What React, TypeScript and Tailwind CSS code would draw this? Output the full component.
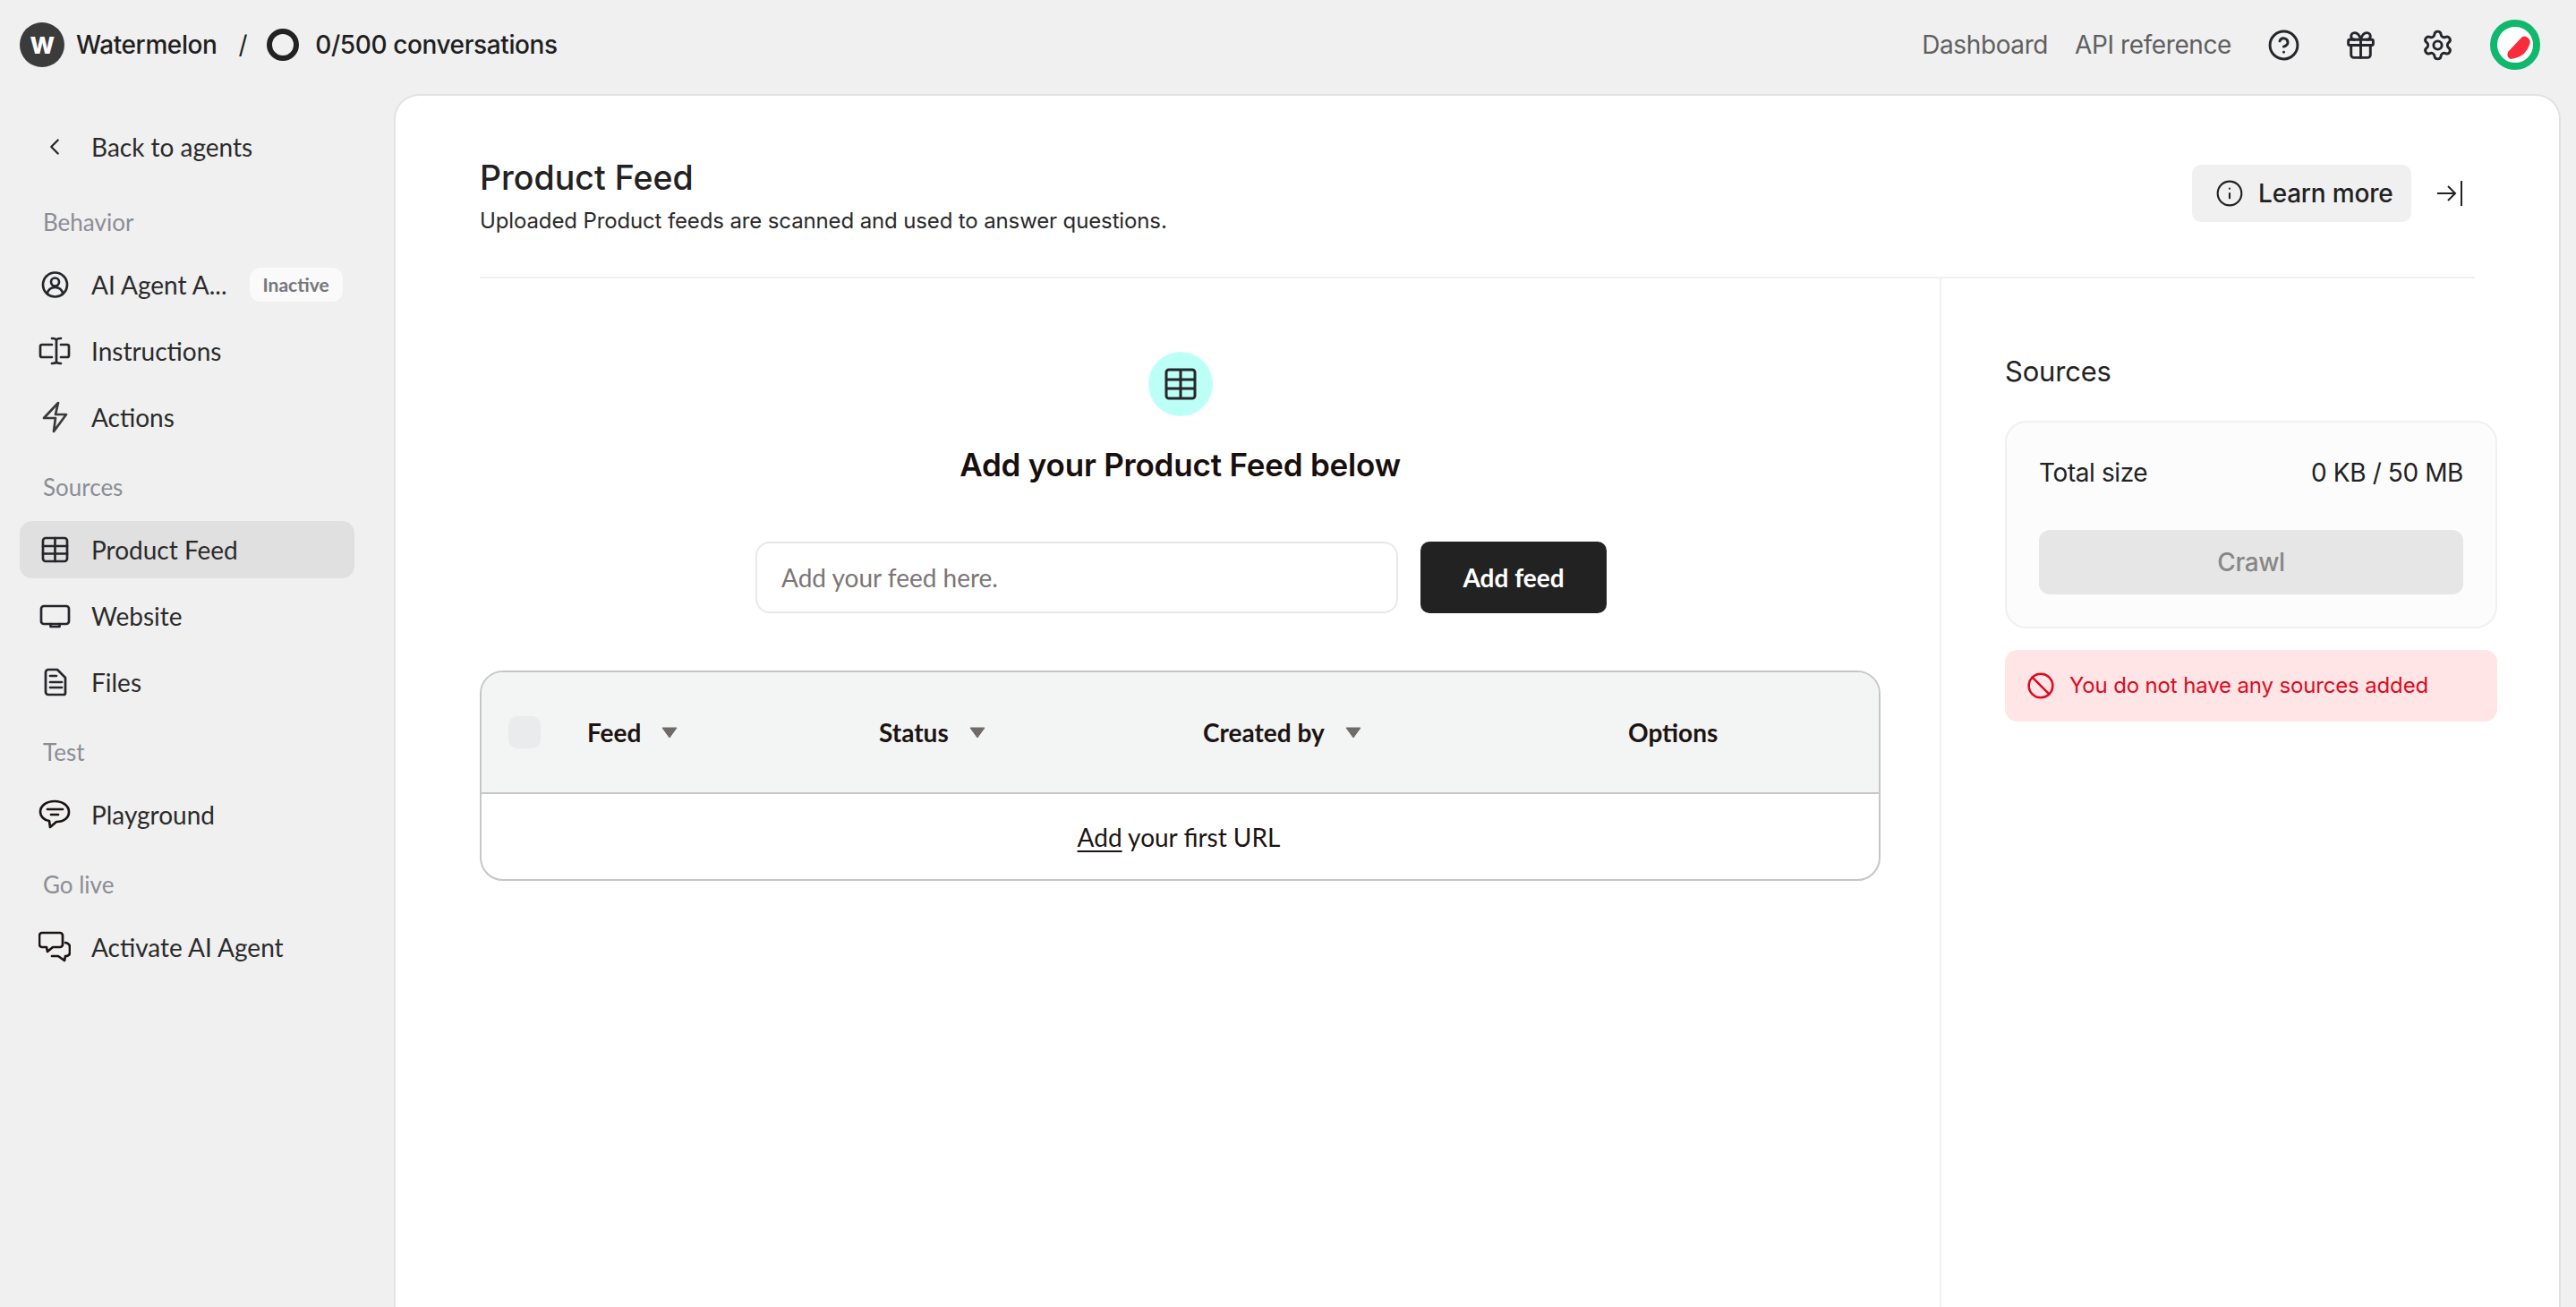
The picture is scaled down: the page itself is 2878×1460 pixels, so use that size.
import { Ban, ChevronLeft, CircleHelp, Gift, Info, Settings } from 'lucide-react';
import type { ReactNode } from 'react';

const ICON_PROPS = {
  viewBox: '0 0 36 36',
  fill: 'none',
  stroke: 'currentColor',
  strokeWidth: 2.7,
  strokeLinecap: 'round',
  strokeLinejoin: 'round',
  className: 'w-[36px] h-[36px] shrink-0 text-[#24262b]',
} as const;

function PersonIcon() {
  return (
    <svg {...ICON_PROPS}>
      <circle cx="18.5" cy="18" r="13.5" />
      <circle cx="18.5" cy="15" r="4.5" />
      <path d="M9.5 28c1.5-5 5-7 9-7s7.5 2 9 7" />
    </svg>
  );
}

function InstructionsIcon() {
  return (
    <svg {...ICON_PROPS}>
      <path d="M15 11H4a2 2 0 0 0-2 2v10a2 2 0 0 0 2 2h11" />
      <path d="M25 11h7a2 2 0 0 1 2 2v10a2 2 0 0 1-2 2h-7" />
      <path d="M20 6v25M15 4c3 0 5 .5 5 2.500 0-2 2-2.500 5-2.500M15 32c3 0 5-.5 5-2.500 0 2 2 2.500 5 2.500" />
    </svg>
  );
}

function BoltIcon() {
  return (
    <svg {...ICON_PROPS} className="w-[36px] h-[36px] shrink-0 text-[#3a3a3a]">
      <path d="M22 2 6 19h13l-2 15 14-19H19z" />
    </svg>
  );
}

function TableIcon() {
  return (
    <svg {...ICON_PROPS}>
      <rect x="5" y="5" width="27" height="26" rx="3" />
      <path d="M18.500 5v26M5 14h27M5 22.500h27" />
    </svg>
  );
}

function MonitorIcon() {
  return (
    <svg {...ICON_PROPS}>
      <rect x="3" y="7" width="31" height="20" rx="3" />
      <path d="M13.500 27v3h10v-3" />
    </svg>
  );
}

function FileIcon() {
  return (
    <svg {...ICON_PROPS}>
      <path d="M11 4h10l9 9v17a2 2 0 0 1-2 2H11a3 3 0 0 1-3-3V7a3 3 0 0 1 3-3z" />
      <path d="M13 11h7M13 18h13M13 24h13" />
    </svg>
  );
}

function ChatIcon() {
  return (
    <svg {...ICON_PROPS} className="w-[36px] h-[36px] shrink-0 text-[#1c1412]">
      <path d="M18 3C9 3 2 8 2 15c0 5 4 9 10 10l1 7 7-6c9 0 14-5 14-11 0-7-7-12-16-12z" />
      <path d="M10 12h17M14 18h8" />
    </svg>
  );
}

function ChatsIcon() {
  return (
    <svg {...ICON_PROPS} className="w-[36px] h-[36px] shrink-0 text-[#1c1412]">
      <path d="M4 2h20a3 3 0 0 1 3 3v10a3 3 0 0 1-3 3h-8l-6 5-1-5H4a3 3 0 0 1-3-3V5a3 3 0 0 1 3-3z" />
      <path d="M30 13q5 1 5 5v6q0 4-5 4l-1 5-7-5h-7" />
    </svg>
  );
}

function NavLabel({ children, first }: { children: ReactNode; first?: boolean }) {
  return (
    <div
      className={`h-[36px] mb-[20px] pl-[26px] flex items-center text-[26px] text-[#8b8d95] ${
        first ? 'mt-[34px]' : 'mt-[28px]'
      }`}
    >
      {children}
    </div>
  );
}

function NavRow({
  icon,
  label,
  active,
  children,
}: {
  icon: ReactNode;
  label: string;
  active?: boolean;
  children?: ReactNode;
}) {
  return (
    <div
      className={`h-[64px] flex items-center gap-[23px] pl-[21px] rounded-[14px] text-[28px] text-[#2b2b2b] ${
        active ? 'bg-[#e0e0e0]' : ''
      }`}
    >
      {icon}
      <span>{label}</span>
      {children}
    </div>
  );
}

function Sidebar() {
  return (
    <aside className="w-[440px] shrink-0 pl-[22px] pr-[44px] pt-[27px] font-['Lato',sans-serif]">
      <NavRow icon={<ChevronLeft size={30} strokeWidth={1.8} className="w-[36px] text-[#24262b]" />} label="Back to agents" />
      <NavLabel first>Behavior</NavLabel>
      <div className="flex flex-col gap-[10px]">
        <NavRow icon={<PersonIcon />} label="AI Agent A...">
          <span className="ml-[2px] h-[38px] w-[104px] rounded-[12px] bg-[#fafafa] flex items-center justify-center text-[21px] font-bold text-[#75777c]">
            Inactive
          </span>
        </NavRow>
        <NavRow icon={<InstructionsIcon />} label="Instructions" />
        <NavRow icon={<BoltIcon />} label="Actions" />
      </div>
      <NavLabel>Sources</NavLabel>
      <div className="flex flex-col gap-[10px]">
        <NavRow icon={<TableIcon />} label="Product Feed" active />
        <NavRow icon={<MonitorIcon />} label="Website" />
        <NavRow icon={<FileIcon />} label="Files" />
      </div>
      <NavLabel>Test</NavLabel>
      <NavRow icon={<ChatIcon />} label="Playground" />
      <NavLabel>Go live</NavLabel>
      <NavRow icon={<ChatsIcon />} label="Activate AI Agent" />
    </aside>
  );
}

function TopBar() {
  return (
    <header className="h-[100px] mb-[5px] shrink-0 flex items-center justify-between pl-[22px] pr-[40px] font-['Inter',sans-serif] text-[28px] tracking-[-0.4px]">
      <div className="flex items-center text-[#1f1f1f] font-medium">
        <div className="w-[50px] h-[50px] rounded-full bg-[#3b3b3b] flex items-center justify-center text-white text-[26px] font-extrabold">
          W
        </div>
        <span className="ml-[13px]">Watermelon</span>
        <span className="ml-[24px] font-normal">/</span>
        <div className="ml-[22px] w-[36px] h-[36px] rounded-full border-[6px] border-[#222222]" />
        <span className="ml-[18px]">0/500 conversations</span>
      </div>
      <div className="flex items-center text-[#606060]">
        <span>Dashboard</span>
        <span className="ml-[30px]">API reference</span>
        <CircleHelp size={37} strokeWidth={1.9} className="ml-[40px] text-[#24262b]" />
        <Gift size={37} strokeWidth={1.9} className="ml-[49px] text-[#24262b]" />
        <Settings size={37} strokeWidth={1.9} className="ml-[49px] text-[#24262b]" />
        <svg viewBox="0 0 56 56" className="ml-[40px] w-[56px] h-[56px]">
          <circle cx="28" cy="28" r="24" fill="#ffffff" stroke="#0fb86c" strokeWidth="8" />
          <path d="M20 36 35 20q3-3 7 0t2 8q-4 12-16 15l-5 1q-5-2-3-8z" fill="#fb2b39" />
        </svg>
      </div>
    </header>
  );
}

function TriangleIcon() {
  return (
    <svg viewBox="0 0 18 12" className="w-[18px] h-[12px]">
      <path d="M1 1h16L9 12z" fill="#6f6b69" stroke="#6f6b69" strokeLinejoin="round" />
    </svg>
  );
}

function HeaderCell({ label, width }: { label: string; width: string }) {
  return (
    <div className={`flex items-center gap-[23px] ${width}`}>
      <span>{label}</span>
      <TriangleIcon />
    </div>
  );
}

function FeedTable() {
  return (
    <div className="w-[1565px] h-[235px] rounded-[26px] border-2 border-[#c5c7c6] overflow-hidden font-['Lato',sans-serif] text-[28px] text-[#1c1412]">
      <div className="h-[136px] bg-[#f3f5f4] border-b-2 border-[#c5c7c6] flex items-center pl-[30px] font-bold">
        <div className="w-[36px] h-[36px] rounded-[10px] bg-[#e9ebec] mr-[52px]" />
        <HeaderCell label="Feed" width="w-[326px]" />
        <HeaderCell label="Status" width="w-[362px]" />
        <HeaderCell label="Created by" width="w-[475px]" />
        <span>Options</span>
      </div>
      <div className="h-[95px] flex items-center justify-center">
        <span className="-ml-[3px]">
          <span className="underline decoration-2 underline-offset-4">Add</span> your first URL
        </span>
      </div>
    </div>
  );
}

function FeedPanel() {
  return (
    <div className="w-[1729px] shrink-0 pl-[96px] pt-[82px] border-r-2 border-[#f0f0f0]">
      <div className="w-[1565px] flex flex-col items-center">
        <div className="w-[72px] h-[72px] rounded-full bg-[#bcfff7] flex items-center justify-center">
          <svg viewBox="0 0 36 36" fill="none" stroke="#24262b" strokeWidth="3" className="w-[36px] h-[36px]">
            <rect x="2" y="2" width="32" height="32" rx="3" />
            <path d="M18 2v32M2 13h32M2 23h32" />
          </svg>
        </div>
        <h2 className="mt-[32px] h-[44px] leading-[44px] font-['Inter',sans-serif] font-semibold text-[35px] tracking-[-0.2px] text-[#170f0d]">
          Add your Product Feed below
        </h2>
        <div className="mt-[64px] ml-[2px] flex gap-[25px] font-['Lato',sans-serif] text-[28px]">
          <input
            placeholder="Add your feed here."
            className="w-[718px] h-[80px] px-[27px] rounded-[16px] border-2 border-[#e8e8e8] bg-white outline-none placeholder:text-[#7b7674]"
          />
          <button className="w-[208px] h-[80px] rounded-[10px] bg-[#222222] text-white font-bold">Add feed</button>
        </div>
      </div>
      <div className="mt-[64px]">
        <FeedTable />
      </div>
    </div>
  );
}

function SourcesPanel() {
  return (
    <div className="flex-1 pl-[71px] pr-[69px] pt-[86px] font-['Inter',sans-serif]">
      <h3 className="h-[36px] leading-[36px] text-[31px] tracking-[-0.2px] text-[#222222]">Sources</h3>
      <div className="mt-[37px] h-[232px] rounded-[24px] border-2 border-[#f0f0f0] bg-[#fcfcfc] px-[36px] pt-[36px] text-[28px] tracking-[-0.4px] text-[#222222]">
        <div className="h-[40px] flex items-center justify-between">
          <span>Total size</span>
          <span>0 KB / 50 MB</span>
        </div>
        <button className="mt-[44px] w-full h-[72px] rounded-[12px] bg-[#e6e6e6] text-[#878787] font-medium">Crawl</button>
      </div>
      <div className="mt-[24px] h-[80px] rounded-[14px] bg-[#ffe5e6] flex items-center gap-[16px] pl-[24px] text-[24px] tracking-[-0.15px] text-[#dc0a1e]">
        <Ban size={32} strokeWidth={1.9} />
        <span>You do not have any sources added</span>
      </div>
    </div>
  );
}

export default function App() {
  return (
    <div className="w-full h-screen overflow-hidden bg-[#f0f0f0] flex flex-col">
      <TopBar />
      <div className="flex-1 min-h-0 flex">
        <Sidebar />
        <main className="flex-1 mr-[17px] bg-white rounded-t-[28px] border-2 border-b-0 border-[#e2e2e2] flex flex-col min-w-0">
          <div className="h-[204px] shrink-0 mx-[94px] border-b-2 border-[#f0f0f0] flex justify-between font-['Inter',sans-serif]">
            <div className="pt-[69px]">
              <h1 className="h-[46px] leading-[46px] text-[37.5px] font-medium text-[#222222]">Product Feed</h1>
              <p className="mt-[9px] h-[32px] leading-[32px] text-[24px] tracking-[-0.13px] text-[#2a2a2a]">
                Uploaded Product feeds are scanned and used to answer questions.
              </p>
            </div>
            <div className="pt-[77px] pr-[10px] flex items-start">
              <button className="h-[64px] w-[245px] rounded-[10px] bg-[#f0f0f0] flex items-center gap-[16px] pl-[26px] text-[28px] tracking-[-0.2px] font-medium text-[#222222]">
                <Info size={32} strokeWidth={1.6} />
                Learn more
              </button>
              <svg viewBox="0 0 36 30" fill="none" stroke="#222222" strokeWidth="2" className="ml-[25px] mt-[17px] w-[36px] h-[30px]">
                <path d="M4 15h20M16 7l8 8-8 8M31 1v28" />
              </svg>
            </div>
          </div>
          <div className="flex-1 flex min-h-0 -ml-[2px]">
            <FeedPanel />
            <SourcesPanel />
          </div>
        </main>
      </div>
    </div>
  );
}
